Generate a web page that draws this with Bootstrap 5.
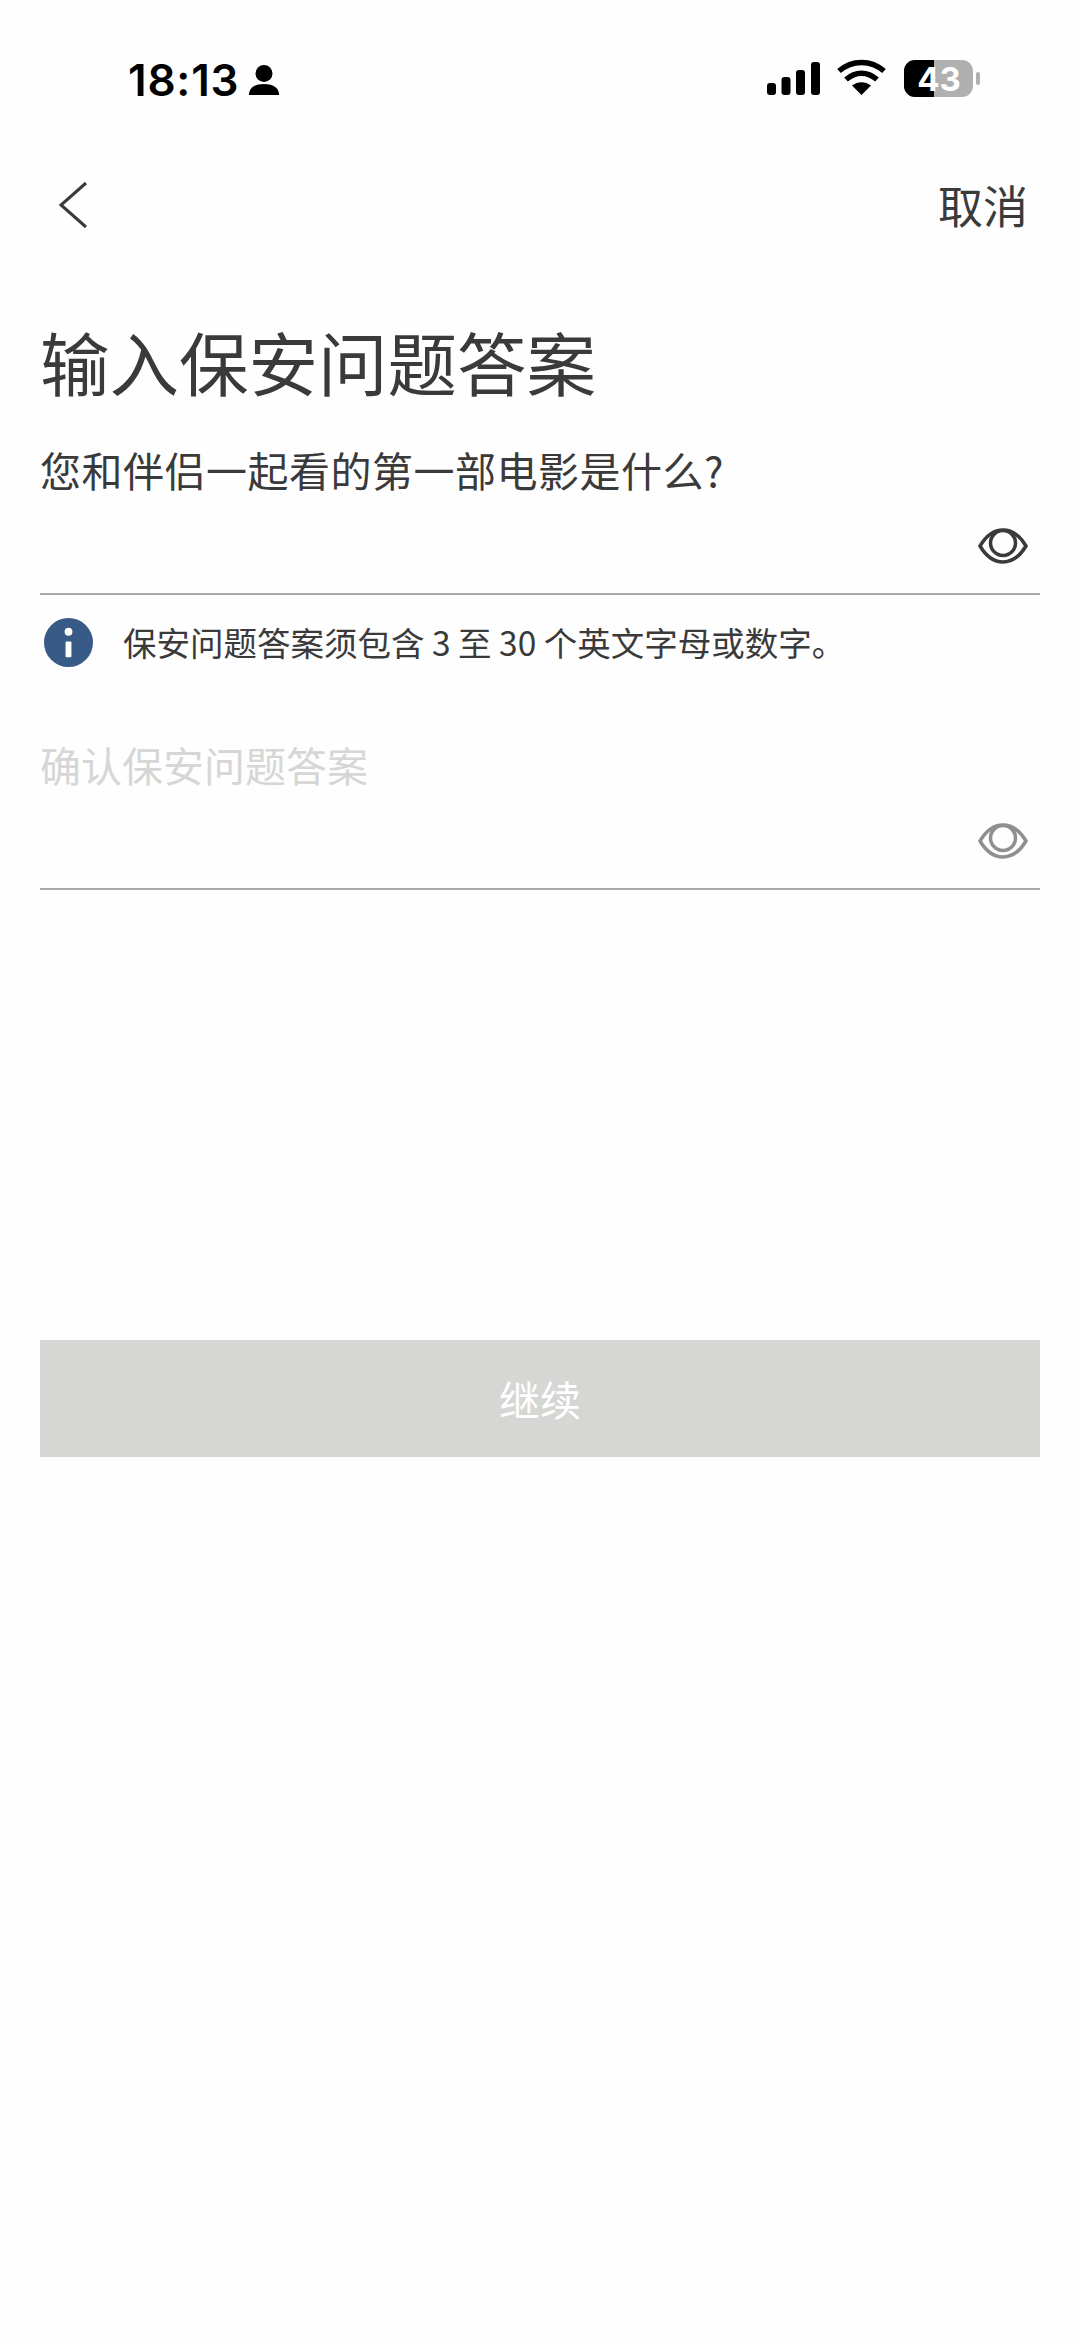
<!DOCTYPE html>
<html lang="zh-CN">
  <head>
    <meta charset="UTF-8" />
    <meta name="viewport" content="width=device-width, initial-scale=1.0" />
    <title>输入保安问题答案</title>
    <link
      href="https://cdn.jsdelivr.net/npm/bootstrap@5.3.2/dist/css/bootstrap.min.css"
      rel="stylesheet"
    />
    <style>
      body {
        background-color: #fefefe;
        color: #3a3a3a;
        font-family: "Noto Sans CJK SC", "Liberation Sans", sans-serif;
        height: 2346px;
        margin: 0;
      }
      .status-bar {
        height: 80px;
        margin-top: 40px;
        padding: 0 98px 0 128px;
        color: #000;
      }
      .status-time {
        font-family: Inter, "Liberation Sans", sans-serif;
        font-size: 44px;
        font-weight: 600;
        line-height: 80px;
        letter-spacing: 0.8px;
        width: 121px;
      }
      .batt-text {
        font-family: Inter, "Liberation Sans", sans-serif;
        font-size: 33px;
        font-weight: 700;
        fill: #fff;
      }
      .top-row {
        height: 80px;
        margin-top: 45px;
        padding: 0 52px 0 58px;
      }
      .cancel-link {
        font-size: 45px;
        line-height: 74px;
        color: #3a3a3a;
      }
      .page-body {
        padding: 0 40px;
      }
      .page-title {
        font-size: 69.500px;
        font-weight: 400;
        line-height: 90px;
        margin: 71px 0 0;
        color: #3a3a3a;
      }
      .field-label {
        font-size: 41px;
        line-height: 56px;
        margin-top: 35px;
      }
      .field-question {
        letter-spacing: 0.5px;
      }
      .field-line {
        height: 98px;
        border-bottom: 2px solid #a8a8a8;
        padding: 31px 12px 0 0;
      }
      .info-row {
        height: 94px;
        margin-left: 4px;
        gap: 30px;
      }
      .info-text {
        font-size: 33.500px;
        word-spacing: 0;
      }
      .field-muted {
        color: #d6d6d6;
        margin-top: 47px;
      }
      .eye-muted {
        color: #8f8f8f;
      }
      .continue-btn,
      .continue-btn:disabled {
        width: 100%;
        height: 117px;
        margin-top: 450px;
        background-color: #d6d6d4;
        border: 0;
        border-radius: 0;
        color: #fff;
        font-size: 41px;
        opacity: 1;
      }
    </style>
  </head>
  <body>
    <div class="status-bar d-flex align-items-center">
      <div class="status-time">18:13</div>
      <svg width="30" height="30" viewBox="0 0 30 30" fill="#000">
        <circle cx="15" cy="8.500" r="8.500" />
        <path d="M0 30c0-7 5-11 15-11s15 4 15 11z" />
      </svg>
      <svg class="ms-auto" width="215" height="60" viewBox="767 50 215 60">
        <g fill="#000">
          <rect x="767" y="83" width="9" height="12" rx="3" />
          <rect x="781.500" y="77" width="9" height="18" rx="3" />
          <rect x="796" y="70" width="9" height="25" rx="3" />
          <rect x="811" y="62" width="9" height="33" rx="3" />
          <path d="M861.500 95l-9.500-9.500c5.500-4.500 13.500-4.500 19 0z" />
        </g>
        <g fill="none" stroke="#000" stroke-width="5.500">
          <path d="M846 79.500c9.500-8.500 21.500-8.500 31 0" />
          <path d="M839 71c13-11.500 32-11.500 45 0" />
        </g>
        <rect x="904" y="60" width="69" height="37" rx="11" fill="#b0b0b0" />
        <path d="M915 60h19v37h-19a11 11 0 0 1-11-11v-15a11 11 0 0 1 11-11z" fill="#000" />
        <rect x="976" y="72" width="4" height="13" rx="2" fill="#b0b0b0" />
        <text class="batt-text" x="939" y="90.500" text-anchor="middle">43</text>
      </svg>
    </div>

    <div class="top-row d-flex justify-content-between align-items-center">
      <svg width="32" height="48" viewBox="0 0 32 48" fill="none" stroke="#3a3a3a" stroke-width="3">
        <path d="M28 2L3 24l25 22" />
      </svg>
      <a class="cancel-link text-decoration-none" href="#">取消</a>
    </div>

    <div class="page-body">
      <h1 class="page-title">输入保安问题答案</h1>
      <div class="field-label field-question">您和伴侣一起看的第一部电影是什么?</div>
      <div class="field-line d-flex justify-content-end align-items-start">
        <svg width="50" height="36" viewBox="0 0 50 36" fill="none" stroke="#3a3a3a" stroke-width="3.500">
          <path d="M2 18C8 8 15 2 25 2s17 6 23 16c-6 10-13 16-23 16S8 28 2 18z" />
          <circle cx="25" cy="15" r="12.500" />
        </svg>
      </div>
      <div class="info-row d-flex align-items-center">
        <svg width="49" height="49" viewBox="0 0 50 50">
          <circle cx="25" cy="25" r="25" fill="#385a87" />
          <circle cx="25" cy="14" r="4" fill="#fff" />
          <rect x="22" y="24" width="6" height="16" rx="1" fill="#fff" />
        </svg>
        <div class="info-text">保安问题答案须包含 3 至 30 个英文字母或数字。</div>
      </div>
      <div class="field-label field-muted">确认保安问题答案</div>
      <div class="field-line eye-muted d-flex justify-content-end align-items-start">
        <svg width="50" height="36" viewBox="0 0 50 36" fill="none" stroke="currentColor" stroke-width="3.500">
          <path d="M2 18C8 8 15 2 25 2s17 6 23 16c-6 10-13 16-23 16S8 28 2 18z" />
          <circle cx="25" cy="15" r="12.500" />
        </svg>
      </div>
      <button class="btn continue-btn" type="button" disabled>继续</button>
    </div>
  </body>
</html>
